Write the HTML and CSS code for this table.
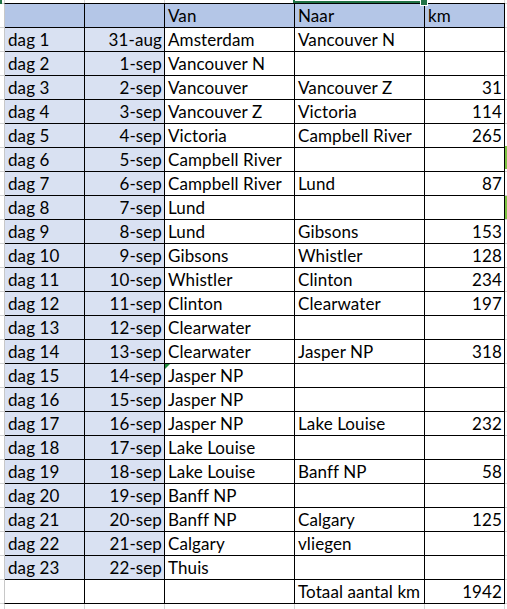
FILE: index.html
```html
<!DOCTYPE html>
<html lang="nl">
<head>
<meta charset="utf-8">
<title>Reisschema</title>
<link rel="stylesheet" href="styles.css">
</head>
<body>
<div class="sheet">
  <div class="sel"></div>
  <div class="sel-handle"></div>
  <div class="sel-left"></div>
  <div class="mark mark-1"></div>
  <div class="mark mark-2"></div>
  <div class="grid">
    <div class="c hd"></div><div class="c hd"></div><div class="c hd">Van</div><div class="c hd">Naar</div><div class="c hd">km</div>

    <div class="c lt">dag 1</div><div class="c lt num">31-aug</div><div class="c">Amsterdam</div><div class="c">Vancouver N</div><div class="c num"></div>
    <div class="c lt">dag 2</div><div class="c lt num">1-sep</div><div class="c">Vancouver N</div><div class="c"></div><div class="c num"></div>
    <div class="c lt">dag 3</div><div class="c lt num">2-sep</div><div class="c">Vancouver</div><div class="c">Vancouver Z</div><div class="c num">31</div>
    <div class="c lt">dag 4</div><div class="c lt num">3-sep</div><div class="c">Vancouver Z</div><div class="c">Victoria</div><div class="c num">114</div>
    <div class="c lt">dag 5</div><div class="c lt num">4-sep</div><div class="c">Victoria</div><div class="c">Campbell River</div><div class="c num">265</div>
    <div class="c lt">dag 6</div><div class="c lt num">5-sep</div><div class="c">Campbell River</div><div class="c"></div><div class="c num"></div>
    <div class="c lt">dag 7</div><div class="c lt num">6-sep</div><div class="c">Campbell River</div><div class="c">Lund</div><div class="c num">87</div>
    <div class="c lt">dag 8</div><div class="c lt num">7-sep</div><div class="c">Lund</div><div class="c"></div><div class="c num"></div>
    <div class="c lt">dag 9</div><div class="c lt num">8-sep</div><div class="c">Lund</div><div class="c">Gibsons</div><div class="c num">153</div>
    <div class="c lt">dag 10</div><div class="c lt num">9-sep</div><div class="c">Gibsons</div><div class="c">Whistler</div><div class="c num">128</div>
    <div class="c lt">dag 11</div><div class="c lt num">10-sep</div><div class="c">Whistler</div><div class="c">Clinton</div><div class="c num">234</div>
    <div class="c lt">dag 12</div><div class="c lt num">11-sep</div><div class="c">Clinton</div><div class="c">Clearwater</div><div class="c num">197</div>
    <div class="c lt">dag 13</div><div class="c lt num">12-sep</div><div class="c">Clearwater</div><div class="c"></div><div class="c num"></div>
    <div class="c lt">dag 14</div><div class="c lt num">13-sep</div><div class="c">Clearwater</div><div class="c">Jasper NP</div><div class="c num">318</div>
    <div class="c lt">dag 15</div><div class="c lt num">14-sep</div><div class="c flag">Jasper NP</div><div class="c"></div><div class="c num"></div>
    <div class="c lt">dag 16</div><div class="c lt num">15-sep</div><div class="c">Jasper NP</div><div class="c"></div><div class="c num"></div>
    <div class="c lt">dag 17</div><div class="c lt num">16-sep</div><div class="c">Jasper NP</div><div class="c">Lake Louise</div><div class="c num">232</div>
    <div class="c lt">dag 18</div><div class="c lt num">17-sep</div><div class="c">Lake Louise</div><div class="c"></div><div class="c num"></div>
    <div class="c lt">dag 19</div><div class="c lt num">18-sep</div><div class="c">Lake Louise</div><div class="c">Banff NP</div><div class="c num">58</div>
    <div class="c lt">dag 20</div><div class="c lt num">19-sep</div><div class="c">Banff NP</div><div class="c"></div><div class="c num"></div>
    <div class="c lt">dag 21</div><div class="c lt num">20-sep</div><div class="c">Banff NP</div><div class="c">Calgary</div><div class="c num">125</div>
    <div class="c lt">dag 22</div><div class="c lt num">21-sep</div><div class="c">Calgary</div><div class="c">vliegen</div><div class="c num"></div>
    <div class="c lt">dag 23</div><div class="c lt num">22-sep</div><div class="c">Thuis</div><div class="c"></div><div class="c num"></div>

    <div class="c"></div><div class="c"></div><div class="c"></div><div class="c">Totaal aantal km</div><div class="c num">1942</div>
  </div>
</div>
</body>
</html>
```
FILE: styles.css
```css
html, body {
  margin: 0;
  padding: 0;
  background: #fff;
}

body {
  font-family: Lato, "Open Sans", sans-serif;
  font-size: 17px;
  letter-spacing: 0.1px;
  color: #000;
}

.sheet {
  position: relative;
  width: 507px;
  height: 609px;
  box-sizing: border-box;
  padding: 3px 0 0 4px;
  overflow: hidden;
  background-image:
    linear-gradient(to bottom, #d4d4d4 0 1px, transparent 1px),
    linear-gradient(to right,
      transparent 0 4px, #d4d4d4 4px 5px,
      transparent 5px 84px, #d4d4d4 84px 85px,
      transparent 85px 164px, #d4d4d4 164px 165px,
      transparent 165px 294px, #d4d4d4 294px 295px,
      transparent 295px 424px, #d4d4d4 424px 425px,
      transparent 425px 504px, #d4d4d4 504px 505px,
      transparent 505px);
  background-size: 100% 24px, 100% 100%;
  background-position: 0 3px, 0 0;
  background-repeat: repeat-y, no-repeat;
}

.grid {
  display: grid;
  grid-template-columns: 79px 79px 129px 129px 79px;
  grid-auto-rows: 23px;
  gap: 1px;
  width: max-content;
  background: #000;
  border: 1px solid #000;
  border-left-color: #c8c8c8;
}

.c {
  background: #fff;
  padding: 1px 2px 0 3px;
  line-height: 22px;
  white-space: nowrap;
  overflow: hidden;
}

.hd {
  background: #b4c6e7;
}

.lt {
  background: #d9e1f2;
}

.num {
  text-align: right;
  padding-right: 2px;
}

.flag {
  position: relative;
}

.flag::before {
  content: "";
  position: absolute;
  left: 0;
  top: 0;
  border-top: 5px solid #1e8a3c;
  border-right: 5px solid transparent;
}

.sel {
  position: absolute;
  left: 293px;
  top: -2px;
  width: 128px;
  height: 3px;
  border: 2px solid #217346;
  border-top: none;
  z-index: 2;
}

.sel-handle {
  position: absolute;
  left: 421px;
  top: 0;
  width: 6px;
  height: 5px;
  background: #217346;
  box-shadow: 0 0 0 1px #fff;
  z-index: 3;
}

.sel-left {
  position: absolute;
  left: 0;
  top: 0;
  width: 2px;
  height: 4px;
  background: #217346;
}

.mark {
  position: absolute;
  left: 505px;
  width: 2px;
  background: #7cc242;
}

.mark-1 {
  top: 146px;
  height: 23px;
}

.mark-2 {
  top: 196px;
  height: 23px;
}
```
